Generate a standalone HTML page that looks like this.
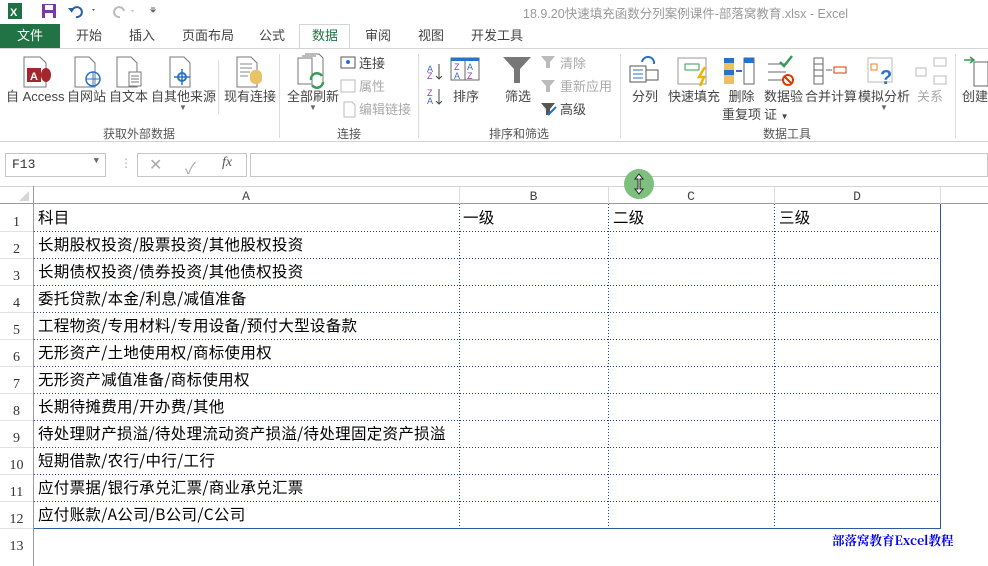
<!DOCTYPE html>
<html><head><meta charset="utf-8"><style>
*{margin:0;padding:0;box-sizing:border-box}
body{width:988px;height:566px;overflow:hidden;background:#fff;font-family:"Liberation Sans","Noto Sans CJK SC",sans-serif;position:relative;color:#444}
.a{position:absolute;white-space:nowrap}
.t{font-size:13px;color:#444;line-height:18px}
.g{font-size:12px;color:#555}
.cell{position:absolute;font-family:"Noto Sans CJK SC",sans-serif;font-size:15.5px;color:#000;letter-spacing:0.3px;white-space:nowrap}
.rn{position:absolute;left:0;width:33px;text-align:center;font-family:"Liberation Serif","Noto Serif CJK SC",serif;font-size:14px;color:#333}
.ch{position:absolute;top:187px;height:17px;font-family:"Liberation Mono",monospace;font-size:13px;color:#444;text-align:center;line-height:19px}
</style></head><body>
<svg class="a" style="left:6px;top:2px" width="150" height="18">
<rect x="2" y="1" width="14" height="16" fill="#1e7145"/><text x="4" y="14" font-size="11" fill="#fff" font-family="Liberation Sans" font-weight="bold">X</text>
<rect x="36" y="2" width="14" height="14" fill="#7b3aa0"/><rect x="39" y="3" width="8" height="5" fill="#fff"/><rect x="39" y="11" width="8" height="5" fill="#fff"/>
<path d="M66 9 a5 5 0 1 1 4 6" stroke="#2a5fa8" stroke-width="2" fill="none"/><path d="M62 6 l5 0 l-1 5z" fill="#2a5fa8"/>
<path d="M86 7l3 0-1.5 2z" fill="#666"/>
<path d="M118 9 a5 5 0 1 0 -4 6" stroke="#bbb" stroke-width="2" fill="none"/><path d="M125 8l3 0-1.5 2z" fill="#bbb"/>
<path d="M145 8l4 0-2 2z M145 6h4" stroke="#666" fill="#666"/>
</svg>
<div class="a" style="left:523px;top:3px;font-size:12.5px;color:#999">18.9.20快速填充函数分列案例课件-部落窝教育.xlsx - Excel</div>
<div class="a" style="left:0;top:24px;width:60px;height:24px;background:#217346;color:#fff;font-size:13px;text-align:center;line-height:24px">文件</div>
<div class="a" style="left:299px;top:24px;width:51px;height:25px;border:1px solid #d4d4d4;border-bottom:none;background:#fff"></div>
<div class="a t" style="left:76px;top:27px">开始</div>
<div class="a t" style="left:129px;top:27px">插入</div>
<div class="a t" style="left:182px;top:27px">页面布局</div>
<div class="a t" style="left:259px;top:27px">公式</div>
<div class="a t" style="left:312px;top:27px;color:#217346">数据</div>
<div class="a t" style="left:365px;top:27px">审阅</div>
<div class="a t" style="left:418px;top:27px">视图</div>
<div class="a t" style="left:471px;top:27px">开发工具</div>
<div class="a" style="left:0;top:48px;width:988px;height:1px;background:#d4d4d4"></div>
<div class="a" style="left:0;top:141px;width:988px;height:1px;background:#d4d4d4"></div>
<svg class="a" style="left:0;top:52px" width="988" height="70">
<g fill="none" stroke="#777">
<path d="M24 5h16l6 6v24h-22z"/><path d="M75 5h14l6 6v24h-20z"/><path d="M117 5h14l6 6v24h-20z"/><path d="M170 5h14l6 6v24h-20z"/>
<path d="M237 5h14l6 6v24h-20z"/>
<path d="M298 6h14v26h-14z M302 4h14 M305 2h14l4 4v26"/>
</g>
<rect x="27" y="16" width="14" height="14" fill="#a4262c"/><text x="30" y="28" font-size="11" fill="#fff" font-weight="bold" font-family="Liberation Sans">A</text>
<ellipse cx="46" cy="23" rx="5" ry="7" fill="#a4262c"/>
<circle cx="93" cy="27" r="7" fill="none" stroke="#2a72c8" stroke-width="1.5"/><path d="M86 27h14M93 20v14" stroke="#2a72c8"/>
<rect x="129" y="20" width="12" height="14" fill="#fff" stroke="#777"/><path d="M131 24h8M131 27h8M131 30h8" stroke="#777"/>
<circle cx="182" cy="25" r="4" fill="none" stroke="#2a72c8" stroke-width="2"/><path d="M182 17v16M174 25h16" stroke="#2a72c8" stroke-width="1.5"/>
<path d="M240 12h12M240 16h12M240 20h10M240 24h8" stroke="#888"/><rect x="250" y="18" width="12" height="14" rx="5" fill="#e8c36a"/>
<path d="M311 28a6 6 0 0 1 11-4M323 30a6 6 0 0 1 -11 3" stroke="#3a9a5a" stroke-width="2.5" fill="none"/>
<rect x="341" y="5" width="14" height="11" fill="none" stroke="#555"/><circle cx="348" cy="10" r="2" fill="#2a72c8"/>
<rect x="341" y="28" width="14" height="12" fill="none" stroke="#bbb"/>
<path d="M344 50h8l3 3v12h-11z" fill="none" stroke="#bbb"/>
<text x="427" y="20" font-size="9" fill="#3a6fc0" font-family="Liberation Sans">A</text><text x="427" y="27" font-size="9" fill="#8a3fb0" font-family="Liberation Sans">Z</text><path d="M439 12v15M436 24l3 3 3-3" stroke="#444" fill="none"/>
<text x="427" y="44" font-size="9" fill="#8a3fb0" font-family="Liberation Sans">Z</text><text x="427" y="52" font-size="9" fill="#3a6fc0" font-family="Liberation Sans">A</text><path d="M439 37v15M436 49l3 3 3-3" stroke="#444" fill="none"/>
<rect x="451" y="6" width="28" height="22" fill="none" stroke="#666"/><rect x="451" y="6" width="28" height="3" fill="#2a72c8"/><path d="M465 9v19" stroke="#666"/>
<text x="454" y="18" font-size="9" fill="#8a3fb0">Z</text><text x="467" y="18" font-size="9" fill="#3a6fc0">A</text><text x="454" y="27" font-size="9" fill="#3a6fc0">A</text><text x="467" y="27" font-size="9" fill="#8a3fb0">Z</text>
<path d="M503 5h28l-11 12v14h-6v-14z" fill="#777"/>
<path d="M541 4h14l-5 6v6h-4v-6z" fill="#bbb"/><path d="M541 28h14l-5 6v6h-4v-6z" fill="#bbb"/><path d="M541 51h14l-5 6v6h-4v-6z" fill="#555"/><path d="M548 63l8-8" stroke="#2a72c8" stroke-width="2"/>
<rect x="630" y="14" width="16" height="16" fill="none" stroke="#555"/><path d="M633 18h10M633 22h10M633 26h10" stroke="#2a72c8"/><rect x="646" y="18" width="12" height="10" fill="none" stroke="#555"/><path d="M642 10a6 6 0 0 1 12 2" stroke="#2a72c8" stroke-width="2" fill="none"/>
<rect x="678" y="6" width="28" height="26" fill="none" stroke="#999"/><rect x="685" y="12" width="14" height="6" fill="none" stroke="#3a9a5a"/><path d="M705 15l-6 10h5l-4 9" stroke="#f0b400" stroke-width="2.5" fill="none"/>
<rect x="724" y="6" width="10" height="26" fill="#f0c060"/><rect x="724" y="6" width="10" height="5" fill="#2a72c8"/><rect x="724" y="18" width="10" height="5" fill="#2a72c8"/><rect x="744" y="6" width="10" height="26" fill="none" stroke="#666"/><rect x="744" y="6" width="10" height="5" fill="#2a72c8"/><path d="M736 19h6" stroke="#2a72c8" stroke-width="2"/>
<path d="M768 12h18M768 20h18M768 28h14" stroke="#666"/><path d="M780 10l4 4 8-10" stroke="#3a9a5a" stroke-width="2.5" fill="none"/><circle cx="788" cy="28" r="5" fill="none" stroke="#d83b01" stroke-width="2"/><path d="M785 25l6 6" stroke="#d83b01" stroke-width="2"/>
<rect x="814" y="6" width="9" height="26" fill="none" stroke="#666"/><path d="M814 12h9M814 18h9M814 24h9M826 18h6" stroke="#666"/><rect x="834" y="15" width="12" height="6" fill="none" stroke="#d83b01"/>
<rect x="868" y="6" width="24" height="24" fill="none" stroke="#bbb"/><rect x="871" y="12" width="6" height="6" fill="none" stroke="#f08020"/><text x="880" y="32" font-size="20" fill="#2a72c8" font-weight="bold">?</text>
<rect x="916" y="16" width="10" height="8" fill="none" stroke="#bbb"/><rect x="934" y="6" width="12" height="8" fill="none" stroke="#bbb"/><rect x="934" y="24" width="12" height="8" fill="none" stroke="#bbb"/>
<path d="M964 8h10M970 5l4 3-4 3" stroke="#3a9a5a" stroke-width="1.5" fill="none"/><rect x="974" y="10" width="14" height="24" fill="none" stroke="#666"/>
</svg>
<div class="a t" style="left:6px;top:88px">自 Access</div>
<div class="a t" style="left:67px;top:88px">自网站</div>
<div class="a t" style="left:109px;top:88px">自文本</div>
<div class="a t" style="left:151px;top:88px">自其他来源</div>
<div class="a" style="left:179px;top:103px;font-size:8px;color:#666">▼</div>
<div class="a t" style="left:224px;top:88px">现有连接</div>
<div class="a t" style="left:287px;top:88px">全部刷新</div>
<div class="a" style="left:309px;top:103px;font-size:8px;color:#666">▼</div>
<div class="a t" style="left:359px;top:55px">连接</div>
<div class="a t" style="left:359px;top:78px;color:#aaa">属性</div>
<div class="a t" style="left:359px;top:101px;color:#aaa">编辑链接</div>
<div class="a t" style="left:453px;top:88px">排序</div>
<div class="a t" style="left:505px;top:88px">筛选</div>
<div class="a t" style="left:560px;top:55px;color:#aaa">清除</div>
<div class="a t" style="left:560px;top:78px;color:#aaa">重新应用</div>
<div class="a t" style="left:560px;top:101px">高级</div>
<div class="a t" style="left:632px;top:88px">分列</div>
<div class="a t" style="left:668px;top:88px">快速填充</div>
<div class="a t" style="left:722px;top:88px;text-align:center">删除<br>重复项</div>
<div class="a t" style="left:764px;top:88px">数据验<br>证 <span style="font-size:8px">▼</span></div>
<div class="a t" style="left:805px;top:88px">合并计算</div>
<div class="a t" style="left:858px;top:88px">模拟分析</div>
<div class="a" style="left:880px;top:103px;font-size:8px;color:#666">▼</div>
<div class="a t" style="left:917px;top:88px;color:#aaa">关系</div>
<div class="a t" style="left:962px;top:88px">创建</div>
<div class="a g" style="left:103px;top:125px">获取外部数据</div>
<div class="a g" style="left:337px;top:125px">连接</div>
<div class="a g" style="left:489px;top:125px">排序和筛选</div>
<div class="a g" style="left:763px;top:125px">数据工具</div>
<div class="a" style="left:279px;top:54px;width:1px;height:84px;background:#ddd"></div>
<div class="a" style="left:418px;top:54px;width:1px;height:84px;background:#ddd"></div>
<div class="a" style="left:620px;top:54px;width:1px;height:84px;background:#ddd"></div>
<div class="a" style="left:955px;top:54px;width:1px;height:84px;background:#ddd"></div>
<div class="a" style="left:218px;top:60px;width:1px;height:54px;background:#ddd"></div>
<div class="a" style="left:5px;top:153px;width:101px;height:24px;border:1px solid #c6c6c6;font-family:'Liberation Mono',monospace;font-size:13px;color:#333;padding:3px 0 0 6px">F13<span style="position:absolute;right:6px;top:2px;font-size:9px;color:#666">▼</span></div>
<div class="a" style="left:120px;top:156px;color:#aaa;font-size:12px">⋮</div>
<div class="a" style="left:137px;top:153px;width:110px;height:24px;border:1px solid #c6c6c6"></div>
<div class="a" style="left:149px;top:155px;color:#aaa;font-size:16px">✕</div>
<div class="a" style="left:185px;top:155px;color:#aaa;font-size:16px">✓</div>
<div class="a" style="left:222px;top:155px;color:#555;font-size:14px;font-style:italic;font-family:'Liberation Serif',serif">fx</div>
<div class="a" style="left:250px;top:153px;width:738px;height:24px;border:1px solid #c6c6c6"></div>
<div class="a" style="left:0;top:186px;width:988px;height:18px;background:#fff;border-top:1px solid #d4d4d4;border-bottom:1px solid #9b9b9b"></div>
<div class="a" style="left:33px;top:186px;width:1px;height:380px;background:#9b9b9b"></div>
<svg class="a" style="left:18px;top:190px" width="12" height="12"><path d="M11 1v10h-10z" fill="#d6d6d6"/></svg>
<div class="ch" style="left:33px;width:426px">A</div>
<div class="ch" style="left:459px;width:149px">B</div>
<div class="ch" style="left:608px;width:166px">C</div>
<div class="ch" style="left:774px;width:166px">D</div>
<div class="a" style="left:459px;top:187px;width:1px;height:17px;background:#dcdcdc"></div>
<div class="a" style="left:608px;top:187px;width:1px;height:17px;background:#dcdcdc"></div>
<div class="a" style="left:774px;top:187px;width:1px;height:17px;background:#dcdcdc"></div>
<div class="a" style="left:940px;top:187px;width:1px;height:17px;background:#dcdcdc"></div>
<svg class="a" style="left:0;top:204px" width="988" height="362">
<g stroke="#1f3f8f" stroke-dasharray="1 2" stroke-width="1">
<path d="M459.5 0v324M608.5 0v324M774.5 0v324"/>
<path d="M34 27.5h906M34 54.5h906M34 81.5h906M34 108.5h906M34 135.5h906M34 162.5h906M34 189.5h906M34 216.5h906M34 243.5h906M34 270.5h906M34 297.5h906"/>
</g>
<path d="M940.5 0v324.5H34" stroke="#2f56a0" fill="none"/>
<g stroke="#e1e1e1"><path d="M0 27.5h33M0 54.5h33M0 81.5h33M0 108.5h33M0 135.5h33M0 162.5h33M0 189.5h33M0 216.5h33M0 243.5h33M0 270.5h33M0 297.5h33M0 324.5h33"/></g>
</svg>
<div class="rn" style="top:215px">1</div><div class="rn" style="top:242px">2</div><div class="rn" style="top:269px">3</div><div class="rn" style="top:296px">4</div><div class="rn" style="top:323px">5</div><div class="rn" style="top:350px">6</div><div class="rn" style="top:377px">7</div><div class="rn" style="top:404px">8</div><div class="rn" style="top:431px">9</div><div class="rn" style="top:458px">10</div><div class="rn" style="top:485px">11</div><div class="rn" style="top:512px">12</div><div class="rn" style="top:539px">13</div>
<div class="cell" style="left:38px;top:206px">科目</div>
<div class="cell" style="left:463px;top:206px">一级</div>
<div class="cell" style="left:613px;top:206px">二级</div>
<div class="cell" style="left:779px;top:206px">三级</div>
<div class="cell" style="left:38px;top:233px">长期股权投资/股票投资/其他股权投资</div>
<div class="cell" style="left:38px;top:260px">长期债权投资/债券投资/其他债权投资</div>
<div class="cell" style="left:38px;top:287px">委托贷款/本金/利息/减值准备</div>
<div class="cell" style="left:38px;top:314px">工程物资/专用材料/专用设备/预付大型设备款</div>
<div class="cell" style="left:38px;top:341px">无形资产/土地使用权/商标使用权</div>
<div class="cell" style="left:38px;top:368px">无形资产减值准备/商标使用权</div>
<div class="cell" style="left:38px;top:395px">长期待摊费用/开办费/其他</div>
<div class="cell" style="left:38px;top:422px">待处理财产损溢/待处理流动资产损溢/待处理固定资产损溢</div>
<div class="cell" style="left:38px;top:449px">短期借款/农行/中行/工行</div>
<div class="cell" style="left:38px;top:476px">应付票据/银行承兑汇票/商业承兑汇票</div>
<div class="cell" style="left:38px;top:503px">应付账款/A公司/B公司/C公司</div>
<div class="a" style="left:832px;top:531px;font-family:'Noto Serif CJK SC',serif;font-weight:bold;font-size:12.5px;color:#0000ee">部落窝教育Excel教程</div>
<svg class="a" style="left:624px;top:169px" width="30" height="30"><circle cx="15" cy="15" r="15" fill="#7dbf7d"/><path d="M15 5l-4 5h3v10h-3l4 5 4-5h-3v-10h3z" fill="#fff" stroke="#222" stroke-width="1"/></svg>
</body></html>
